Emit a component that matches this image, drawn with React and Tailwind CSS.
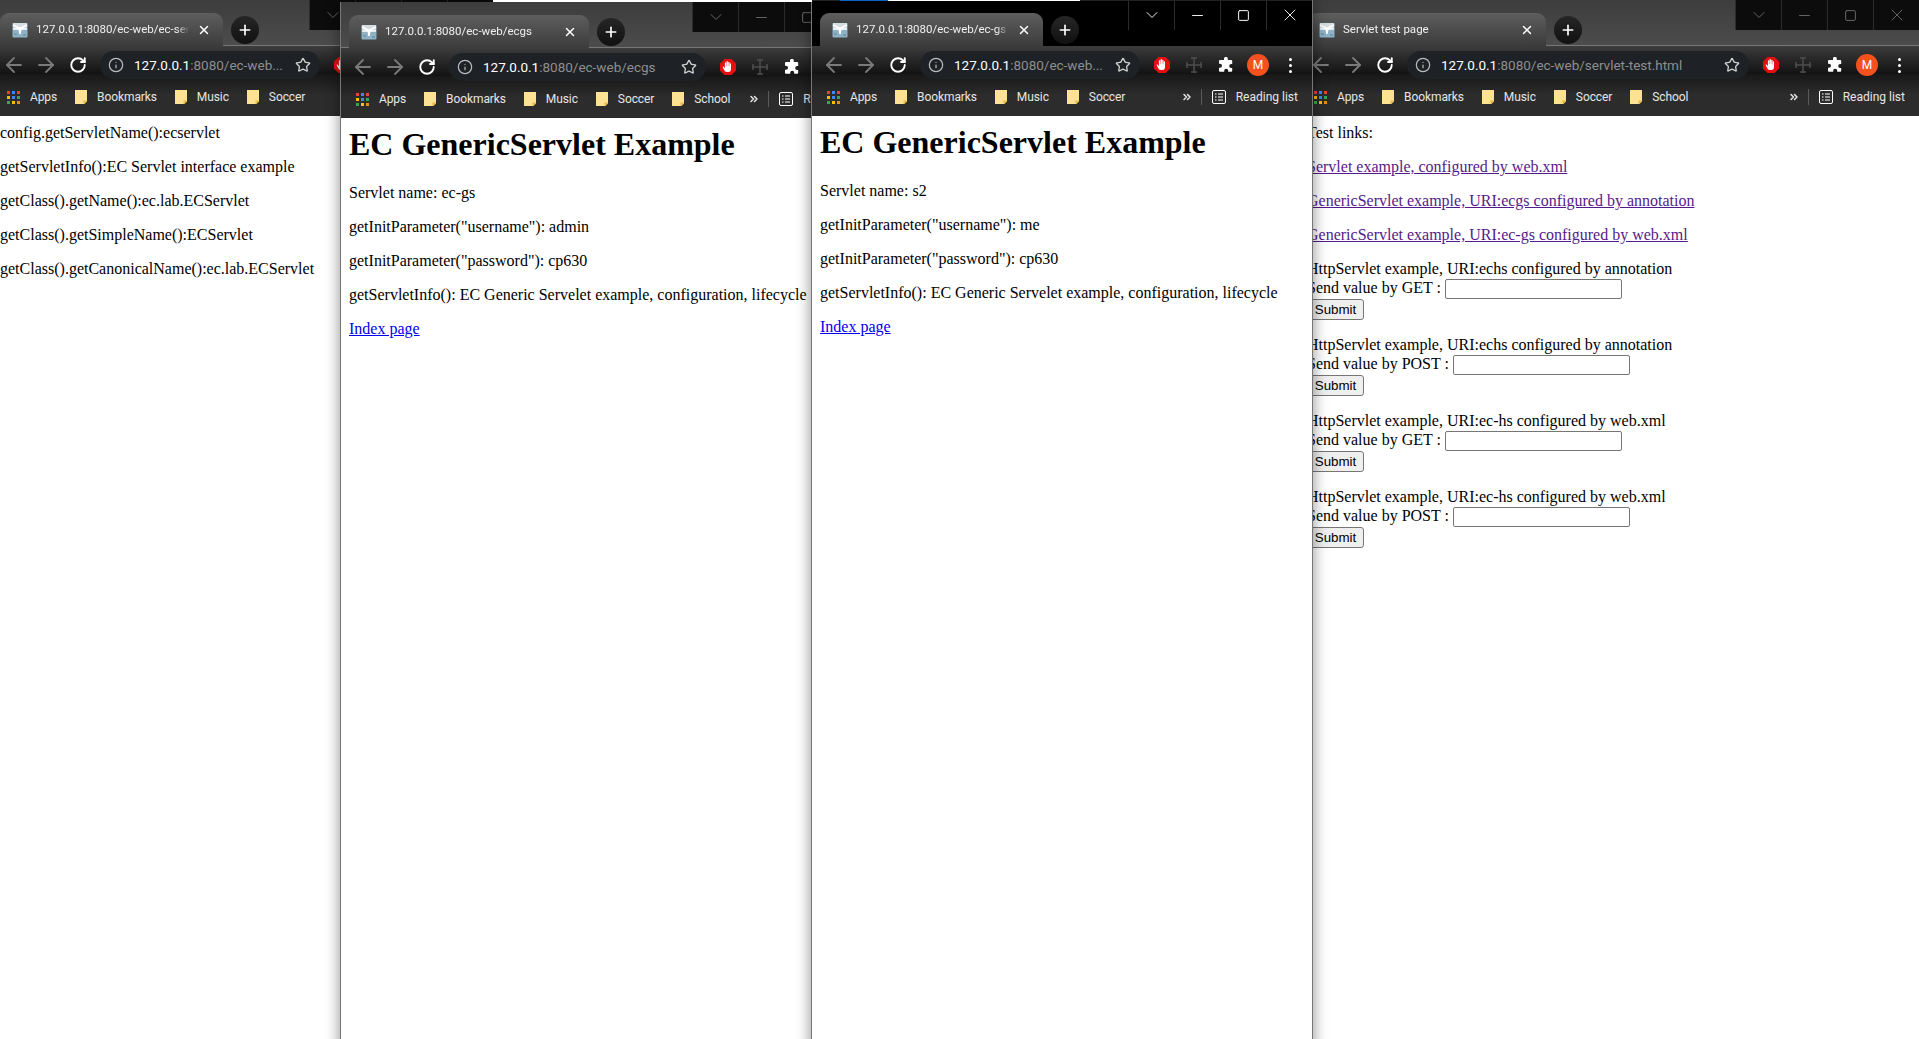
import { ArrowLeft, ArrowRight, RotateCw, Info, Star, X, Plus, Minus, Square, ChevronDown, ChevronsRight } from "lucide-react";

const urlFont = { fontFamily: 'Roboto, "Open Sans", sans-serif' };

// the tab icon, blue-grey box with a white mark across it
function Favicon() {
  return (
    <svg width="16" height="16" viewBox="0 0 16 16" className="shrink-0">
      <rect x="0.5" y="1" width="15" height="14.5" rx="1" fill="#8fb3c6" />
      <path d="M1 1h14v5l-7 2-7-2z" fill="#d5dde0" />
      <path d="M1 3l6 3M15 3L9 6M1 7l6 0M15 7l-6 0M7 6l1 6 1-6z" stroke="#fff" strokeWidth="1.5" fill="#fff" />
      <path d="M2 12h3M11 13h3" stroke="#5f8296" strokeWidth="1" />
    </svg>
  );
}

function AppsGrid() {
  const colors = ["#ea4335", "#4285f4", "#ea4335", "#fbbc04", "#4285f4", "#34a853", "#34a853", "#fbbc04", "#ea8a1c"];
  return (
    <div className="grid grid-cols-3 gap-[2px] w-[13px] h-[13px] shrink-0">
      {colors.map((c, i) => (
        <div key={i} className="w-[3px] h-[3px]" style={{ backgroundColor: c }} />
      ))}
    </div>
  );
}

function Folder() {
  return (
    <svg width="12" height="14" viewBox="0 0 12 14" className="shrink-0">
      <path d="M0 0h12v11l-3 3H0z" fill="#fde293" />
      <path d="M12 10.5v1L9.5 14H8.5v-3.5z" fill="#e8b94a" />
    </svg>
  );
}

function StopHand() {
  return (
    <svg width="18" height="18" viewBox="0 0 18 18" className="shrink-0">
      <path d="M5.5 1h7L17 5.5v7L12.5 17h-7L1 12.5v-7z" fill="#e60f0f" />
      <path
        d="M6 13.5L3.8 9.6c-.4-.8.6-1.4 1.1-.7l1 1.3V5c0-1 1.3-1 1.3 0v3h.3V3.8c0-1 1.4-1 1.4 0V8h.3V4.4c0-1 1.3-1 1.3 0V8.500h.3V6c0-.9 1.200-.9 1.200 0v5c0 1.800-1 3-2.600 3H8c-.9 0-1.500-.2-2-.5z"
        fill="#fff"
      />
    </svg>
  );
}

function MoveIcon() {
  return (
    <svg width="20" height="20" viewBox="0 0 20 20" className="shrink-0">
      <path d="M10 2v16M2 10h16M7 3h6M7 17h6M3 7v6M17 7v6" stroke="#4d4d4d" strokeWidth="1.500" fill="none" />
    </svg>
  );
}

function Puzzle() {
  return (
    <svg width="16" height="16" viewBox="0 0 16 16" className="shrink-0">
      <path
        d="M6 1.800a1.900 1.900 0 0 1 3.800 0V3h3.400a1 1 0 0 1 1 1v3h-1a2 2 0 0 0 0 4h1v2.800a1 1 0 0 1-1 1h-3v-1a2 2 0 0 0-4 0v1H2a1 1 0 0 1-1-1v-3.100h1a2 2 0 0 0 0-4H1V4a1 1 0 0 1 1-1h4z"
        fill="#fff"
      />
    </svg>
  );
}

function ReadingIcon() {
  return (
    <svg width="14" height="14" viewBox="0 0 14 14" className="shrink-0">
      <rect x="0.5" y="0.5" width="13" height="13" rx="1.500" fill="none" stroke="#fff" />
      <path d="M3 4h1.500M6 4h5M3 7h1.500M6 7h5M3 10h1.500M6 10h5" stroke="#fff" />
    </svg>
  );
}

function Tab({ title, width }) {
  return (
    <div className={`${width} h-[33px] ml-2 shrink-0 rounded-t-[9px] bg-gradient-to-b from-[#5e5e5e] to-[#3c3c3c] flex items-center pl-3 pr-3 gap-2`}>
      <Favicon />
      <div
        className="flex-1 min-w-0 text-[11.5px] text-[#f0f0f0] whitespace-nowrap overflow-hidden [mask-image:linear-gradient(to_right,black_calc(100%-12px),transparent)]"
        style={urlFont}
      >
        {title}
      </div>
      <X size={14} strokeWidth={2.5} className="text-white shrink-0" />
    </div>
  );
}

function WindowControls({ active }) {
  const color = active ? "text-white" : "text-[#6a6a6a]";
  const cells = "w-[46px] h-[30px] flex items-center justify-center bg-[#0c0c0c] border-l border-[#2c2c2c]";
  return (
    <div className={`flex ml-auto self-start ${color} ${active ? "[&>div]:bg-black" : ""}`}>
      <div className={cells}><ChevronDown size={20} strokeWidth={1.1} /></div>
      <div className={cells}><Minus size={17} strokeWidth={1.3} /></div>
      <div className={cells}><Square size={13} strokeWidth={1.8} /></div>
      <div className={cells}><X size={20} strokeWidth={1.1} /></div>
    </div>
  );
}

function Browser({ win, tabTitle, tabWidth, omniWidth, host, rest, bookmarks, active, children }) {
  return (
    <div className={`absolute top-0 h-[1100px] overflow-hidden bg-white shadow-[0_0_14px_rgba(0,0,0,0.45)] ${win}`}>
      {/* title bar */}
      <div className={`h-[46px] flex ${active ? "bg-black" : "bg-gradient-to-b from-[#3d3d3d] to-[#4c4c4c] border-b border-[#777]"}`}>
        <div className={`flex items-end relative z-10 ${active ? "" : "-mb-px"}`}>
          <Tab title={tabTitle} width={tabWidth} />
          <div className="w-7 h-7 ml-2 mb-[2px] rounded-full bg-gradient-to-b from-[#262626] to-[#111] flex items-center justify-center">
            <Plus size={16} strokeWidth={2.500} className="text-white" />
          </div>
        </div>
        <WindowControls active={active} />
      </div>
      {/* toolbar */}
      <div className="relative z-10 h-[28px] pt-[5px] pl-[6px] flex items-start bg-gradient-to-b from-[#3c3c3c] to-[#131313]">
        <div className="w-8 h-7 flex items-center justify-center"><ArrowLeft size={24} strokeWidth={1.8} className="text-[#7a7a7a]" /></div>
        <div className="w-8 h-7 flex items-center justify-center"><ArrowRight size={24} strokeWidth={1.8} className="text-[#7a7a7a]" /></div>
        <div className="w-8 h-7 flex items-center justify-center"><RotateCw size={18} strokeWidth={2.500} className="text-white" /></div>
        <div className={`${omniWidth} h-7 ml-[6px] shrink-0 rounded-full bg-[#1e2125] flex items-center pl-2 pr-[9px]`}>
          <Info size={16} strokeWidth={1.8} className="text-[#bdbdbd] shrink-0" />
          <div className="ml-[10px] flex-1 min-w-0 text-[13.5px] whitespace-nowrap overflow-hidden" style={urlFont}>
            <span className="text-white">{host}</span>
            <span className="text-[#8f8f8f]">{rest}</span>
          </div>
          <Star size={16} strokeWidth={2} className="text-[#d0d0d0] shrink-0" />
        </div>
        <div className="flex items-center h-7 ml-[6px]">
          <div className="w-8 flex justify-center"><StopHand /></div>
          <div className="w-8 flex justify-center"><MoveIcon /></div>
          <div className="w-8 flex justify-center"><Puzzle /></div>
          <div className="w-8 flex justify-center">
            <div className="w-[22px] h-[22px] rounded-full bg-[#f4511e] text-white text-xs flex items-center justify-center" style={urlFont}>M</div>
          </div>
          <div className="w-8 flex flex-col items-center gap-[3px]">
            <div className="w-[3px] h-[3px] bg-white rounded-full" />
            <div className="w-[3px] h-[3px] bg-white rounded-full" />
            <div className="w-[3px] h-[3px] bg-white rounded-full" />
          </div>
        </div>
      </div>
      {/* bookmarks bar */}
      <div className="h-[42px] pt-[4px] flex items-center pl-[15px] pr-[14px] bg-gradient-to-b from-[#181818] via-[#2c2c2c] to-[#2c2c2c] text-xs tracking-[-0.1px] text-[#e6e6e6] whitespace-nowrap" style={urlFont}>
        <AppsGrid />
        <span className="ml-[10px] mr-[18px]">Apps</span>
        {bookmarks.map((b) => (
          <div key={b} className="flex items-center gap-[10px] mr-[18px]">
            <Folder />
            <span>{b}</span>
          </div>
        ))}
        <div className="ml-auto flex items-center">
          <ChevronsRight size={12} strokeWidth={3} className="text-[#e6e6e6]" />
          <div className="w-px h-4 bg-[#5a5a5a] ml-2 mr-[10px]" />
          <ReadingIcon />
          <span className="ml-[10px] tracking-normal">Reading list</span>
        </div>
      </div>
      {/* page */}
      <div className="text-base leading-[18px] text-black" style={{ fontFamily: '"Liberation Serif", serif' }}>
        {children}
      </div>
    </div>
  );
}

function Line({ children }) {
  return <p className="mb-4">{children}</p>;
}

function GenericPage({ name, username }) {
  return (
    <div className="px-2 pt-2">
      <h1 className="text-[32px] leading-[37px] font-bold mb-[21px]">EC GenericServlet Example</h1>
      <Line>Servlet name: {name}</Line>
      <Line>getInitParameter("username"): {username}</Line>
      <Line>getInitParameter("password"): cp630</Line>
      <Line>getServletInfo(): EC Generic Servelet example, configuration, lifecycle</Line>
      <Line><a className="text-[#0000ee] underline">Index page</a></Line>
    </div>
  );
}

function ValueForm({ title, method }) {
  return (
    <div className="mb-4">
      <div>{title}</div>
      <div className="h-[21px] pt-[1px] flex items-start">
        <span className="whitespace-pre">Send value by {method} : </span>
        <div className="w-[177px] h-[20px] bg-white border border-[#767676] rounded-[2px]" />
      </div>
      <button
        className="block h-[21px] w-[57px] bg-[#efefef] border border-[#767676] rounded-[3px] text-[13.33px] leading-[19px] text-black text-center"
        style={{ fontFamily: '"Liberation Sans", sans-serif' }}
      >
        Submit
      </button>
    </div>
  );
}

export default function App() {
  return (
    <div className="relative w-full h-[1039px] overflow-hidden bg-[#111]">
      {/* bits of the desktop behind the windows */}
      <div className="absolute z-40 left-[493px] top-0 w-[319px] h-[2px] bg-white" />
      <div className="absolute z-40 left-[812px] top-0 w-[500px] h-[1px] bg-[#222] flex">
        <div className="ml-[28px] w-[48px] bg-[#0a64c8]" />
        <div className="w-[192px] bg-white" />
      </div>

      <Browser
        win="left-[-8px] w-[501px] z-10"
        tabTitle="127.0.0.1:8080/ec-web/ec-servlet"
        tabWidth="w-[223px]"
        omniWidth="w-[220px]"
        host="127.0.0.1"
        rest=":8080/ec-web..."
        bookmarks={["Bookmarks", "Music", "Soccer"]}
      >
        <div className="px-2 pt-2">
          <Line>config.getServletName():ecservlet</Line>
          <Line>getServletInfo():EC Servlet interface example</Line>
          <Line>getClass().getName():ec.lab.ECServlet</Line>
          <Line>getClass().getSimpleName():ECServlet</Line>
          <Line>getClass().getCanonicalName():ec.lab.ECServlet</Line>
        </div>
      </Browser>

      <Browser
        win="left-[340px] w-[536px] z-20 mt-[2px] border-l border-[#777]"
        tabTitle="127.0.0.1:8080/ec-web/ecgs"
        tabWidth="w-[240px]"
        omniWidth="w-[257px]"
        host="127.0.0.1"
        rest=":8080/ec-web/ecgs"
        bookmarks={["Bookmarks", "Music", "Soccer", "School"]}
      >
        <GenericPage name="ec-gs" username="admin" />
      </Browser>

      <Browser
        win="left-[1299px] w-[620px] z-10"
        tabTitle="Servlet test page"
        tabWidth="w-[239px]"
        omniWidth="w-[342px]"
        host="127.0.0.1"
        rest=":8080/ec-web/servlet-test.html"
        bookmarks={["Bookmarks", "Music", "Soccer", "School"]}
      >
        <div className="px-2 pt-2">
          <Line>Test links:</Line>
          <Line><a className="text-[#551a8b] underline">Servlet example, configured by web.xml</a></Line>
          <Line><a className="text-[#551a8b] underline">GenericServlet example, URI:ecgs configured by annotation</a></Line>
          <Line><a className="text-[#551a8b] underline">GenericServlet example, URI:ec-gs configured by web.xml</a></Line>
          <ValueForm title="HttpServlet example, URI:echs configured by annotation" method="GET" />
          <ValueForm title="HttpServlet example, URI:echs configured by annotation" method="POST" />
          <ValueForm title="HttpServlet example, URI:ec-hs configured by web.xml" method="GET" />
          <ValueForm title="HttpServlet example, URI:ec-hs configured by web.xml" method="POST" />
        </div>
      </Browser>

      <Browser
        win="left-[811px] w-[502px] z-30 border-x border-[#777]"
        tabTitle="127.0.0.1:8080/ec-web/ec-gs"
        tabWidth="w-[223px]"
        omniWidth="w-[220px]"
        host="127.0.0.1"
        rest=":8080/ec-web..."
        bookmarks={["Bookmarks", "Music", "Soccer"]}
        active
      >
        <GenericPage name="s2" username="me" />
      </Browser>
    </div>
  );
}
